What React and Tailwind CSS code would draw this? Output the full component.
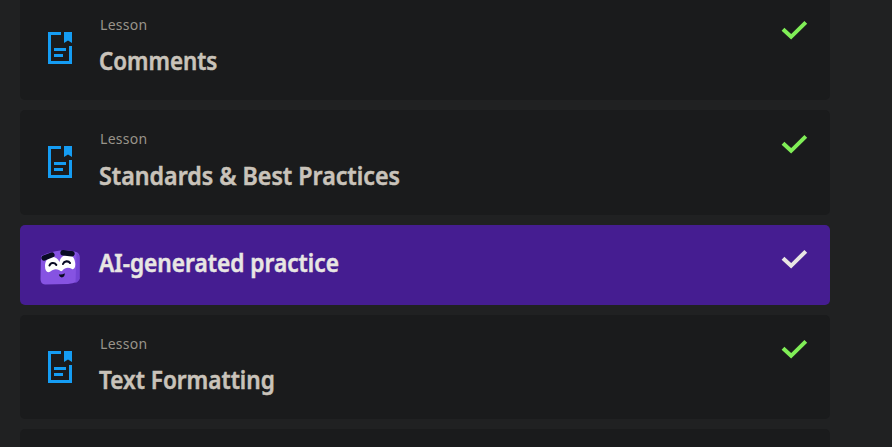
import React from "react";

function LessonIcon() {
  return (
    <svg className="block" width="24" height="32" viewBox="0 0 24 32" fill="none">
      <path d="M13 1.5H1.5V30.5H22.5V14" stroke="#159df3" strokeWidth="3" />
      <path d="M16 0H24V11L20 8.6L16 11Z" fill="#159df3" />
      <path d="M6 16H18V19H6ZM6 22H15V25H6Z" fill="#159df3" />
    </svg>
  );
}

function RobotIcon() {
  return (
    <svg className="block" width="40" height="36" viewBox="0 0 40 36" fill="none">
      <path d="M1 7C10 2 27 -1 36 3Q39.5 4 39.5 8V30Q38 34 28 35L5 35.5Q0.5 35 0.5 30Z" fill="#8653e2" />
      <path d="M36.5 4Q39.5 5 39.5 8V30Q38 33 35.5 34Z" fill="#7444d4" />
      <path d="M5 17C5 7 16 5 19.5 13C21 4 34 3 35 13C36 18 34 21 32 20C29 18 25 18 22.5 21.5Q21 23 19 21C16 19.5 13 20 10 22.8C7 24 5 22 5 17Z" fill="#fff" />
      <path d="M4 9L12 5.9" stroke="#090b24" strokeWidth="5.2" strokeLinecap="round" />
      <path d="M23 3.8L32 4.8" stroke="#090b24" strokeWidth="5.4" strokeLinecap="round" />
      <path d="M9.5 16.5C10.5 13.4 14.5 13.2 16.3 15.8M23 15C24.2 11.8 28.5 11.5 30 14" stroke="#090b24" strokeWidth="2.1" strokeLinecap="round" />
      <path d="M18.9 25.3Q22 26 24.8 24.3Q24.8 28.3 21.8 28.4Q19.3 28.2 18.9 25.3Z" fill="#090b24" />
    </svg>
  );
}

function Check({ className }) {
  return (
    <svg className={`block ${className}`} width="27" height="20" viewBox="0 0 27 20" fill="none">
      <path d="M2 9.2L10.1 16.8L24.8 2.3" stroke="currentColor" strokeWidth="4" />
    </svg>
  );
}

function Lesson({ title, height, pad, titleClass }) {
  return (
    <section className={`flex w-[810px] shrink-0 bg-[#1a1b1c] ${height} ${pad}`}>
      <div className="ml-7 mt-[17px] w-6"><LessonIcon /></div>
      <div className="ml-[27px] flex-1">
        <p className="ml-px h-5 text-[14px] leading-5 tracking-[0.3px] text-[#99948a]">Lesson</p>
        <h2 className={`w-max origin-left whitespace-nowrap text-[24.5px] font-semibold leading-8 text-[#c9c3ba] [-webkit-text-stroke:0.5px_currentColor] ${titleClass}`}>{title}</h2>
      </div>
      <Check className="mr-[22px] mt-[5px] text-[#80ee57]" />
    </section>
  );
}

export default function App() {
  return (
    <main className="flex h-[447px] w-[892px] flex-col gap-2.5 overflow-hidden bg-[#202122] pl-5 font-['Noto_Sans',sans-serif]">
      <Lesson title="Comments" height="h-[100px]" pad="pt-[15px] rounded-b-[5px]" titleClass="mt-[10px] scale-x-[0.912]" />
      <Lesson title="Standards & Best Practices" height="h-[105px]" pad="pt-[19px] rounded-[5px]" titleClass="mt-[11px] scale-x-[0.947]" />
      <section className="flex h-20 w-[810px] shrink-0 rounded-[5px] bg-[#451d91]">
        <div className="ml-5 mt-6 w-10"><RobotIcon /></div>
        <div className="ml-[19px] mt-[22px] flex-1">
          <h2 className="w-max origin-left scale-x-[0.926] whitespace-nowrap text-[24.5px] font-semibold leading-8 text-[#e8e6e3] [-webkit-text-stroke:0.5px_currentColor]">AI-generated practice</h2>
        </div>
        <Check className="mr-[22px] mt-6 text-[#e8e6e3]" />
      </section>
      <Lesson title="Text Formatting" height="h-[104px]" pad="pt-[19px] rounded-[5px]" titleClass="mt-[10px] scale-x-[0.922]" />
      <section className="h-[18px] w-[810px] shrink-0 rounded-t-[5px] bg-[#1a1b1c]" />
    </main>
  );
}
